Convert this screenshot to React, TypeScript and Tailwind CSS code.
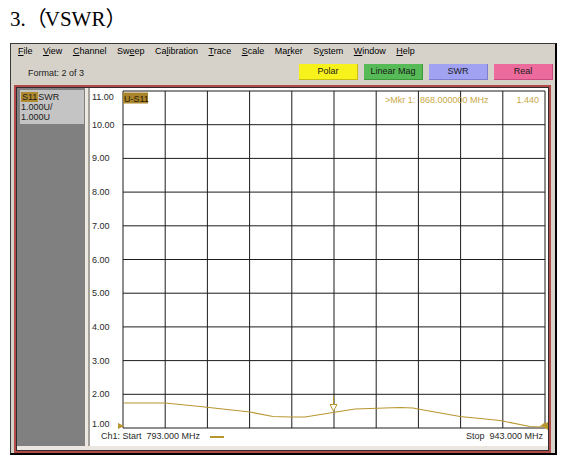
import React from 'react';

// menu labels with the index of the underlined mnemonic letter
const menuItems: { label: string; u: number }[] = [
  { label: 'File', u: 0 },
  { label: 'View', u: 0 },
  { label: 'Channel', u: 0 },
  { label: 'Sweep', u: 2 },
  { label: 'Calibration', u: 2 },
  { label: 'Trace', u: 0 },
  { label: 'Scale', u: 0 },
  { label: 'Marker', u: 2 },
  { label: 'System', u: 1 },
  { label: 'Window', u: 0 },
  { label: 'Help', u: 0 },
];

const formatButtons = [
  { label: 'Polar', cls: 'bg-[#f8f21c] border-[#c8c010]' },
  { label: 'Linear Mag', cls: 'bg-[#56bb56] border-[#3a9a3a]' },
  { label: 'SWR', cls: 'bg-[#a2a2f2] border-[#7e7ed0]' },
  { label: 'Real', cls: 'bg-[#ec6a9c] border-[#c84a7c]' },
];

// grid geometry (svg coords, origin = top-left of the white chart area)
const GX0 = 33;
const GX1 = 455;
const GY0 = 3;
const GY1 = 340;
const DX = (GX1 - GX0) / 10;
const DY = (GY1 - GY0) / 10;

const trace: [number, number][] = [
  [34, 315], [75, 315], [110, 318.5], [160, 324], [183, 328.5], [200, 329],
  [215, 329], [243, 324.5], [265, 321], [310, 319.5], [323, 320], [328, 321],
  [370, 328.5], [410, 332.5], [440, 338.5], [450, 339], [455, 335],
];

const yLabels = ['11.00', '10.00', '9.00', '8.00', '7.00', '6.00', '5.00', '4.00', '3.00', '2.00', '1.00'];

const MenuItem = ({ label, u }: { label: string; u: number }) => (
  <span>
    {label.slice(0, u)}
    <span className="underline underline-offset-1">{label[u]}</span>
    {label.slice(u + 1)}
  </span>
);

const Chart = () => {
  const gold = '#b8962e';
  return (
    <svg width={458} height={342} className="block" fontSize={9} fill="#333">
      {Array.from({ length: 11 }, (_, i) => (
        <line key={'h' + i} x1={GX0} x2={GX1} y1={GY0 + i * DY} y2={GY0 + i * DY} stroke="#1c1c1c" strokeWidth={1} />
      ))}
      {Array.from({ length: 11 }, (_, j) => (
        <line key={'v' + j} x1={GX0 + j * DX} x2={GX0 + j * DX} y1={GY0} y2={GY1} stroke="#1c1c1c" strokeWidth={1} />
      ))}
      {yLabels.map((t, i) => {
        let y = GY0 + i * DY;
        if (i === 0) y = 8.5;
        if (i === 10) y = 336;
        return (
          <text key={t} x={2} y={y} dominantBaseline="central" fill="#2a2a2a">
            {t}
          </text>
        );
      })}
      <rect x={33} y={4.5} width={25} height={11} fill="#a8842c" />
      <text x={34} y={10.5} dominantBaseline="central" fill="#2a1a00">U-S11</text>
      <text x={295} y={12} dominantBaseline="central" fill="#c8a848">&gt;Mkr  1:</text>
      <text x={330} y={12} dominantBaseline="central" fill="#c8a848">868.000000 MHz</text>
      <text x={449} y={12} dominantBaseline="central" textAnchor="end" fill="#c8a848">1.440</text>
      <polyline points={trace.map(p => p.join(',')).join(' ')} fill="none" stroke={gold} strokeWidth={1.2} />
      {/* marker 1 */}
      <line x1={243.5} x2={243.5} y1={308} y2={323} stroke={gold} strokeWidth={1} />
      <polygon points="240,316.5 247,316.5 243.5,323" fill="white" stroke={gold} strokeWidth={1} />
      {/* reference / stop triangles */}
      <polygon points="28,335 34,338 28,341" fill={gold} />
      <polygon points="458,334 451,338 458,342" fill={gold} />
    </svg>
  );
};

export default function App() {
  return (
    <div className="w-[567px] h-[464px] bg-white overflow-hidden font-['Liberation_Sans',Arial,sans-serif]">
      <div className="h-[43px] pl-[10px] pt-[5px] text-[21px] leading-[28px] text-black font-['Liberation_Serif','Noto_Sans_CJK_SC',serif]">
        3.<span className="tracking-[-2px]">（</span>VSWR）
      </div>

      <div className="ml-[10px] w-[547px] h-[412px] flex flex-col bg-[#d6d2ca] border-l border-t border-[#3a3a3a] border-r-2 border-b-2 border-r-black border-b-black">
        {/* menu bar */}
        <div className="h-[16px] flex items-center gap-[10.5px] pl-[7px] text-[9px] text-black">
          {menuItems.map(m => (
            <MenuItem key={m.label} {...m} />
          ))}
        </div>

        {/* format row */}
        <div className="h-[25px] flex items-start pt-[4px] pr-[2px]">
          <div className="pl-[17px] pt-[4px] text-[9px] leading-[10px] text-[#202020]">Format: 2 of 3</div>
          <div className="ml-auto flex gap-[6px]">
            {formatButtons.map(b => (
              <div
                key={b.label}
                className={`w-[59px] h-[16px] flex items-center justify-center text-[9px] text-[#1a1a1a] border-b border-r ${b.cls}`}
              >
                {b.label}
              </div>
            ))}
          </div>
        </div>

        {/* trace window */}
        <div className="flex-1 ml-[3px] mr-[4px] border-2 border-[#b24a4a]">
          <div className="h-full flex flex-col border border-[#2e2e2e]">
            <div className="flex-1 flex">
              {/* channel panel */}
              <div className="w-[68px] bg-[#808080] pt-[2px] pl-[3px]">
                <div className="w-[64px] h-[34px] bg-[#c4c4c4] pl-[1px] pt-[2px] text-[9px] leading-[10px] text-[#202020]">
                  <div>
                    <span className="bg-[#b08a2c] px-[1px]">S11</span>
                    <span>SWR</span>
                  </div>
                  <div>1.000U/</div>
                  <div>1.000U</div>
                </div>
              </div>
              <div className="w-[5px] bg-[#ece8e2] border-r-2 border-[#a6a29c]" />

              {/* plot */}
              <div className="w-[458px] bg-white flex flex-col">
                <Chart />
                <div className="h-[14px] flex items-center pl-[11px] pr-[5px] text-[9px] text-[#2a2a2a] whitespace-pre">
                  <span>Ch1: Start  793.000 MHz</span>
                  <span className="ml-[10px] w-[14px] h-[2px] bg-[#b8962e]" />
                  <span className="ml-auto">Stop  943.000 MHz</span>
                </div>
              </div>
            </div>
            <div className="h-[4px] bg-[#ece6e0]" />
          </div>
        </div>
      </div>
    </div>
  );
}
